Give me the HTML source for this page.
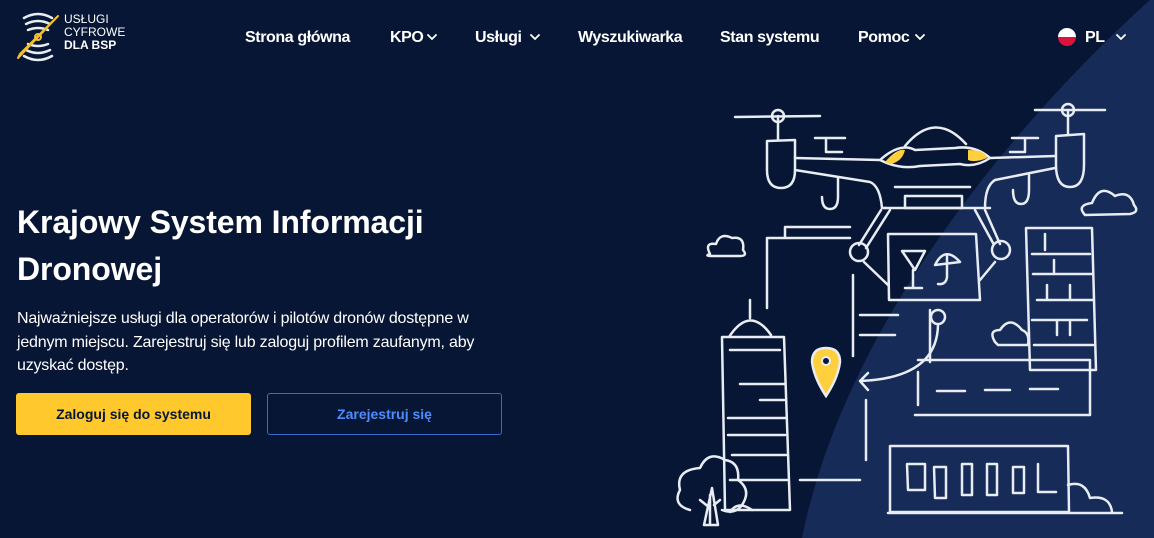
<!DOCTYPE html>
<html><head><meta charset="utf-8"><style>
*{margin:0;padding:0;box-sizing:border-box}
html,body{width:1154px;height:538px;overflow:hidden}
body{background:#071634;font-family:"Liberation Sans",sans-serif;color:#fff;position:relative}
.nav a{position:absolute;top:29px;font-size:16px;font-weight:bold;color:#fff;text-decoration:none;letter-spacing:-0.4px}
h1{position:absolute;left:17px;top:199px;font-size:32px;line-height:47px;font-weight:bold;letter-spacing:-0.1px}
p{position:absolute;left:17px;top:307px;width:505px;font-size:16px;line-height:23.5px;letter-spacing:-0.2px}
.b1{position:absolute;left:16px;top:393px;width:235px;height:42px;background:#ffc82c;border-radius:3px;color:#071634;font-weight:bold;font-size:14px;text-align:center;line-height:42px}
.b2{position:absolute;left:267px;top:393px;width:235px;height:42px;border:1px solid #3a6cc8;border-radius:3px;color:#4b8dff;font-weight:bold;font-size:14px;text-align:center;line-height:40px}
svg{position:absolute;left:0;top:0}
</style></head><body>
<svg width="1154" height="538">
<path d="M1150 0C1050 90 850 300 802 538L1154 538L1154 0Z" fill="#162b57"/>
<g fill="none" stroke="#e8ecf3" stroke-width="2.5" stroke-linecap="round" stroke-linejoin="round">
<path d="M24 18q14-8 28 0M26 24q12-6 24 0M28 30q10-4 20 0M24 56q14 8 28 0M26 50q12 6 24 0M28 44q10 4 20 0"/>
<path d="M58 16 L18 58 L20 54 L56 18Z" stroke="#f2c12e" stroke-width="2"/>
<circle cx="38" cy="37" r="3" stroke="#f2c12e" stroke-width="2"/>
<path d="M735 117L820 116M778 116V140M1035 110L1105 110M1068 110V135"/>
<circle cx="778" cy="116" r="6"/><circle cx="1068" cy="110" r="6"/>
<path d="M767 141V170q0 18 14 18q14 0 14-18V140Z"/>
<path d="M1056 136V165q0 22 14 22q14 0 14-22V134Z"/>
<path d="M822 197q0 12 8 12q8 0 8-12V178M1013 190q0 14 8 14q8 0 8-14V175"/>
<path d="M815 138H845M826 138V152H842M1012 138H1038M1025 138V152H1010"/>
<path d="M795 158L880 160M990 158L1055 156M795 170L870 182Q880 186 882 208L886 208M1055 168L995 180Q985 186 985 208"/>
<path d="M905 146Q935 110 966 144"/>
<path d="M880 160Q900 142 915 150L955 148Q975 145 990 158Q975 168 960 164L920 166Q900 170 880 160Z"/>
<path d="M895 187H970M905 196H962V208H905Z"/>
<path d="M885 208H990"/>
<path d="M881 210L859 245M890 210L866 248M985 210L1000 244M975 210L993 243"/>
<circle cx="859" cy="252" r="9"/><circle cx="1001" cy="250" r="9"/>
<path d="M864 262L888 285M995 262L980 280"/>
<path d="M888 234H976L980 300H889Z"/>
<path d="M902 251H925L915 270ZM913 270V288M905 288H922M935 265Q945 245 960 262ZM947 256V277Q946 285 938 284"/>
<path d="M785 227H850M785 227V238M767 238H850M767 238V308M853 275V356M860 315H898M860 335H895M866 400V460M860 480H800"/>
<path d="M930 310V362M918 360H1090V415H915M918 372V405"/>
<path d="M938 325Q937 378 860 381M868 373L860 381L868 390"/>
<circle cx="938" cy="317" r="7"/>
<path d="M937 391H965M985 390H1010M1030 389H1058"/>
<path d="M750 300V318M729 337Q750 305 771 335M722 337H784L790 510H725ZM730 350H780M740 384H785M760 400H784M728 418H785M728 435H785M732 455H786M730 480H787"/>
<path d="M1026 228H1092L1096 370H1030ZM1032 254H1090M1033 274H1092M1037 300H1093M1032 320H1087M1034 345H1093M1045 234V250M1054 260V272M1047 285V300M1070 285V300M1057 320V335M1070 322V335"/>
<path d="M890 446H1068L1069 512H890ZM907 464H925V490H908ZM934 467H946V498H935ZM962 464H972V495H962ZM987 464H997V495H987ZM1013 467H1024V493H1013ZM1038 464V492H1056"/>
<path d="M1068 485Q1085 480 1090 498Q1110 495 1112 512"/>
<path d="M888 513H1122"/>
<path d="M710 254Q704 242 716 244Q720 232 732 238Q745 236 743 250Q748 256 740 256H712Q704 256 710 254Z"/>
<path d="M1085 215Q1076 205 1092 203Q1100 183 1115 196Q1130 190 1134 205Q1140 212 1130 214Z"/>
<path d="M995 342Q988 330 1000 330Q1010 315 1022 330Q1030 333 1028 345H998Z"/>
<path d="M690 510Q672 505 680 490Q675 470 700 468Q708 450 725 460Q740 462 738 480Q752 490 742 505Q735 515 722 510M710 495L710 525M704 525L712 488L718 525ZM700 500L710 508M720 500L714 505M730 512Q738 500 752 510"/>
</g>
<path d="M885 162Q897 148 905 150Q902 162 890 164Z" fill="#ffcf3e"/>
<path d="M968 150Q985 150 987 158Q975 163 968 160Z" fill="#ffcf3e"/>
<path d="M826 348Q812 348 812 362Q814 378 826 396Q838 378 840 362Q840 348 826 348Z" fill="#ffcf3e" stroke="#e8ecf3" stroke-width="2.5"/>
<circle cx="826" cy="361" r="4" fill="#071634" stroke="#e8ecf3" stroke-width="2"/>
<clipPath id="fc"><circle cx="1067" cy="37" r="9"/></clipPath>
<g clip-path="url(#fc)"><rect x="1056" y="26" width="22" height="11" fill="#fff"/><rect x="1056" y="37" width="22" height="11" fill="#dc143c"/></g>
<g fill="none" stroke="#fff" stroke-width="1.8" stroke-linecap="round"><path d="M428 35l4 4 4-4M531 35l4 4 4-4M916 35l4 4 4-4M1117 35l4 4 4-4"/></g>
</svg>
<div style="position:absolute;left:64px;top:13px;font-size:12px;line-height:13px;color:#fff">USŁUGI<br>CYFROWE<br><b>DLA BSP</b></div>
<div class="nav">
<a style="left:245px">Strona główna</a><a style="left:390px">KPO</a><a style="left:475px">Usługi</a><a style="left:578px">Wyszukiwarka</a><a style="left:720px">Stan systemu</a><a style="left:858px">Pomoc</a><a style="left:1085px">PL</a>
</div>
<h1>Krajowy System Informacji<br>Dronowej</h1>
<p>Najważniejsze usługi dla operatorów i pilotów dronów dostępne w jednym miejscu. Zarejestruj się lub zaloguj profilem zaufanym, aby uzyskać dostęp.</p>
<div class="b1">Zaloguj się do systemu</div>
<div class="b2">Zarejestruj się</div>
</body></html>
